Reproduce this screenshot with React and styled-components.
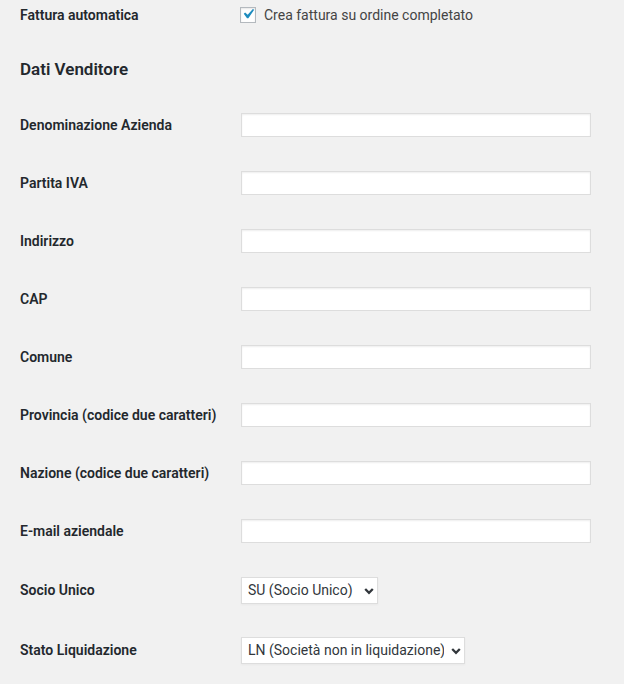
import React, { useState } from "react";
import styled, { createGlobalStyle } from "styled-components";

const GlobalStyle = createGlobalStyle`
  body {
    margin: 0;
    background: #f1f1f1;
    font-family: Roboto, "Liberation Sans", sans-serif;
    font-size: 14px;
    color: #23282d;
  }
`;

const textFields = [
  "Denominazione Azienda",
  "Partita IVA",
  "Indirizzo",
  "CAP",
  "Comune",
  "Provincia (codice due caratteri)",
  "Nazione (codice due caratteri)",
  "E-mail aziendale",
];

const App = () => {
  const [auto, setAuto] = useState(true);
  const [values, setValues] = useState({});
  const [socio, setSocio] = useState("SU");
  const [stato, setStato] = useState("LN");

  return (
    <>
      <GlobalStyle />
      <Page>
        <Row height={30}>
          <Label>Fattura automatica</Label>
          <CheckLine onClick={() => setAuto(!auto)}>
            <Box>
              {auto && (
                <svg width="20" height="20" viewBox="0 0 20 20">
                  <path
                    d="M14.83 4.89l1.34.94-5.81 8.38H9.02L5.78 9.67l1.34-1.25 2.57 2.4z"
                    fill="#1e8cbe"
                  />
                </svg>
              )}
            </Box>
            Crea fattura su ordine completato
          </CheckLine>
        </Row>

        <Heading>Dati Venditore</Heading>

        {textFields.map((name) => (
          <Row key={name} height={58}>
            <Label>{name}</Label>
            <TextInput
              type="text"
              value={values[name] || ""}
              onChange={(e) => setValues({ ...values, [name]: e.target.value })}
            />
          </Row>
        ))}

        <Row height={60}>
          <Label>Socio Unico</Label>
          <SelectWrap>
            <Select width={137} value={socio} onChange={(e) => setSocio(e.target.value)}>
              <option value="SU">SU (Socio Unico)</option>
              <option value="SM">SM (più soci)</option>
            </Select>
            <Chevron />
          </SelectWrap>
        </Row>

        <Row height={60}>
          <Label>Stato Liquidazione</Label>
          <SelectWrap>
            <Select width={224} value={stato} onChange={(e) => setStato(e.target.value)}>
              <option value="LN">LN (Società non in liquidazione)</option>
              <option value="LS">LS (Società in liquidazione)</option>
            </Select>
            <Chevron />
          </SelectWrap>
        </Row>
      </Page>
    </>
  );
};

const Chevron = () => (
  <ChevronIcon width="10" height="10" viewBox="0 0 10 10">
    <path
      d="M1.2 3 L5 6.8 L8.8 3"
      fill="none"
      stroke="#32373c"
      strokeWidth="2.3"
    />
  </ChevronIcon>
);

const Page = styled.div`
  padding-left: 20px;
  width: 604px;
`;

const Row = styled.div`
  display: grid;
  grid-template-columns: 221px 1fr;
  align-items: center;
  height: ${({ height }) => height}px;
`;

const Label = styled.div`
  font-weight: 600;
  font-size: 14px;
  color: #23282d;
`;

const Heading = styled.h2`
  margin: 0;
  height: 66px;
  box-sizing: border-box;
  padding-top: 12px;
  display: flex;
  align-items: center;
  font-size: 17px;
  font-weight: 600;
  color: #23282d;
`;

const CheckLine = styled.label`
  display: flex;
  align-items: center;
  gap: 8px;
  margin-left: -1px;
  color: #444;
  font-size: 14px;
  cursor: pointer;
`;

const Box = styled.span`
  width: 16px;
  height: 16px;
  box-sizing: border-box;
  border: 1px solid #b4b9be;
  background: #fff;
  box-shadow: inset 0 1px 2px rgba(0, 0, 0, 0.1);
  display: flex;
  align-items: center;
  justify-content: center;
  overflow: hidden;

  svg {
    flex: none;
    margin: -2px 0 0 -1px;
  }
`;

const TextInput = styled.input`
  width: 350px;
  height: 24px;
  box-sizing: border-box;
  border: 1px solid #ddd;
  box-shadow: inset 0 1px 2px rgba(0, 0, 0, 0.07);
  background: #fff;
  font-family: inherit;
  font-size: 14px;
  color: #32373c;
  padding: 2px 6px;
  outline: none;
  &:focus {
    border-color: #5b9dd9;
  }
`;

const SelectWrap = styled.div`
  position: relative;
  justify-self: start;
  display: flex;
`;

const Select = styled.select`
  appearance: none;
  -webkit-appearance: none;
  width: ${({ width }) => width}px;
  height: 27px;
  box-sizing: border-box;
  border: 1px solid #ddd;
  border-radius: 0;
  background: #fff;
  box-shadow: 0 1px 2px rgba(0, 0, 0, 0.04);
  font-family: Roboto, "Liberation Sans", sans-serif;
  font-size: 14px;
  color: #32373c;
  padding: 0 20px 0 6px;
  outline: none;
`;

const ChevronIcon = styled.svg`
  position: absolute;
  right: 4px;
  top: 9px;
  pointer-events: none;
`;

export default App;
